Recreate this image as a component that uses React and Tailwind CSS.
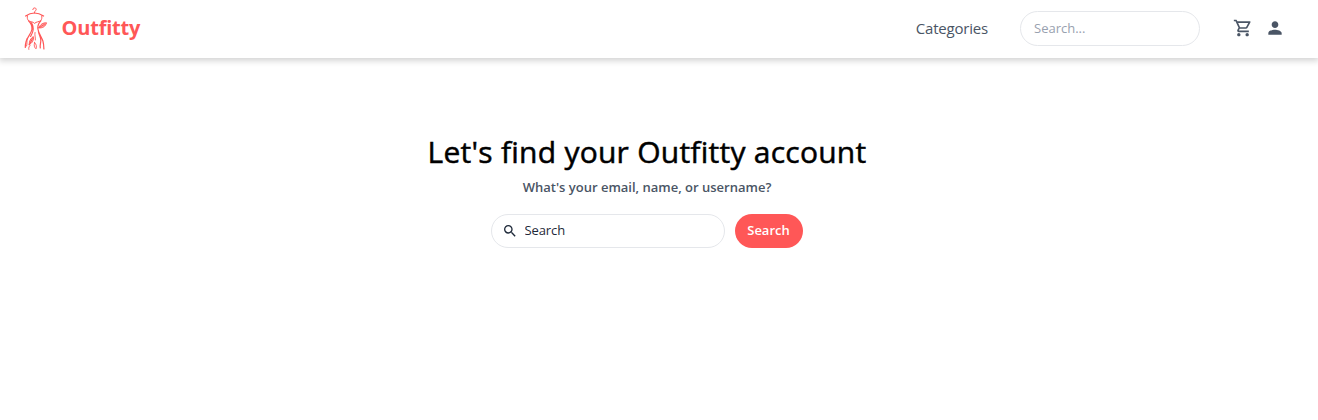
import React from "react";
import { MdOutlineShoppingCart, MdPerson, MdSearch } from "react-icons/md";

function DressLogo() {
  return (
    <svg className="h-[44px] w-6 shrink-0" viewBox="0 0 24 44" fill="none" stroke="#ff5757" strokeWidth="1" strokeLinecap="round" strokeLinejoin="round">
      <path d="M8.8 2.6C8.6 .4 12.2 .3 12.2 2.4C12.2 3.8 10.4 3.6 10.4 6" />
      <path d="M1.6 9C4.5 7 7.5 6 10.4 6S16.5 7 19.6 9" strokeWidth="1.2" />
      <path d="M3.4 8.8C3 11 3.4 12.4 4.6 13.8C6.6 15 9 14.6 10.6 16.4C12.4 14.6 14.6 15 16.6 13.8C17.8 12.4 18 11 17.8 8.8" />
      <path d="M4.6 13.8C6.8 16 8.4 19 7.9 22.5C7.3 26.5 3.4 30 2.1 34.5C1.6 36.5 1.2 38.5 1.3 40.5M7.2 15.6C9.4 18.4 9.5 21 8.9 24C8.4 26.5 7.4 27.6 6.6 29.5" strokeWidth="1.2" />
      <path d="M16.8 13.8C14.8 16 13.4 18.8 13.9 22C14.6 26.4 17.4 29.6 18.9 34C19.7 36.8 19.8 39.2 19.9 42M14.4 24.5C14.8 27.5 16.6 29.8 16.8 33C17 36 15.6 38 16.3 41" strokeWidth="1.2" />
      <path d="M14.8 20.8C16.4 17.2 18.8 15.8 22.5 15.8C21.4 19.4 18.8 21.4 14.8 20.8ZM15.6 20.3L20.4 17.4" fill="#ff5757" fillOpacity=".5" />
      <path d="M5.2 37.6C5.2 34 6.6 31.4 9.3 29.6C9.9 33.2 8.4 36 5.2 37.6ZM5.8 36.8L8.4 31.8" fill="#ff5757" fillOpacity=".5" />
      <path d="M3.2 31.5C2.6 34.5 3.4 36 2.6 39M4.8 42.4C4.4 40.5 5.2 39.2 6.2 38.2M11 25.5C10.4 28 11.6 30 11.4 33M10.6 35.5C9.8 38.5 10.2 40.4 12 41.8C12.8 39.4 12.4 37.2 10.6 35.5Z" strokeWidth=".9" />
    </svg>
  );
}

export default function App() {
  return (
    <div className="min-h-screen bg-white font-['Open_Sans','Noto_Sans',sans-serif]">
      <header className="flex h-[58px] items-center bg-white pr-[33px] pb-px pl-6 shadow-[0_2px_6px_1px_rgba(0,0,0,0.17)]">
        <DressLogo />
        <span className="ml-[13.5px] pb-px text-[20px] leading-7 font-bold tracking-[-0.2px] text-[#ff5757]">Outfitty</span>
        <span className="ml-auto pb-px text-[15px] leading-6 tracking-[-0.2px] text-gray-600">Categories</span>
        <input
          type="text"
          placeholder="Search..."
          className="ml-8 h-[35px] w-[180px] rounded-full border border-gray-200 bg-white px-[13px] pb-[2px] text-[13px] text-gray-700 outline-none placeholder:text-gray-400"
        />
        <MdOutlineShoppingCart className="mb-px ml-[33px] size-5 text-gray-600" />
        <MdPerson className="mb-px ml-[12px] size-5 text-gray-600" />
      </header>
      <main className="flex flex-col items-center pt-[76px] pr-6">
        <h1 className="text-[30px] leading-9 font-medium tracking-[0.25px] text-black [-webkit-text-stroke:0.5px_black]">Let's find your Outfitty account</h1>
        <p className="mt-[7px] text-[13px] leading-5 font-semibold text-gray-600">What's your email, name, or username?</p>
        <form className="mt-[17px] flex gap-[10px]" onSubmit={(e) => e.preventDefault()}>
          <label className="flex h-[34px] w-[234px] items-center rounded-full border border-gray-200 pl-[10px] text-gray-800">
            <MdSearch className="size-4 shrink-0" />
            <input
              type="text"
              placeholder="Search"
              className="ml-[6.5px] w-[170px] bg-transparent text-[13px] tracking-[-0.1px] outline-none placeholder:text-gray-800"
            />
          </label>
          <button className="h-[34px] w-[68px] rounded-full bg-[#ff5757] pr-[7px] pl-[6px] text-[13px] font-semibold text-white">Search</button>
        </form>
      </main>
    </div>
  );
}
